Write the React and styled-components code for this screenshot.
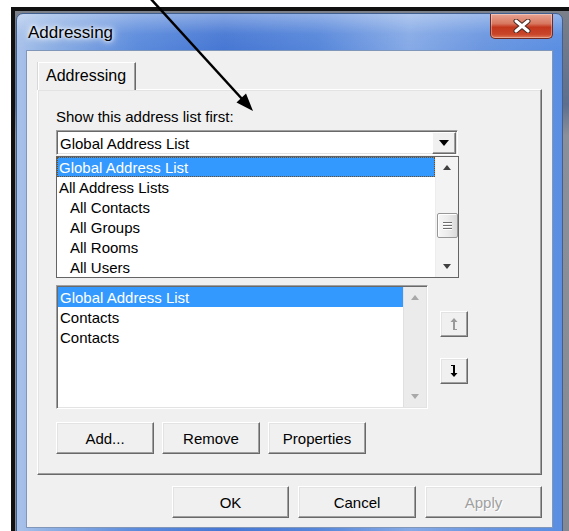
import React from 'react';
import styled, { createGlobalStyle } from 'styled-components';

const Global = createGlobalStyle`
  html, body { margin: 0; padding: 0; background: #fff; }
  body { font-family: "Liberation Sans", Arial, sans-serif; color: #000; }
  * { box-sizing: border-box; }
`;

const Screen = styled.div`
  position: relative;
  width: 569px;
  height: 531px;
  overflow: hidden;
  background: #fff;
  padding: 7px 0 0 11px;
`;

const Shot = styled.div`
  height: 524px;
  border-top: 4px solid #111;
  border-left: 4px solid #111;
  background: linear-gradient(180deg, #7b8089 0%, #5d6f8e 18%, #8a9099 24%, #858a92 100%);
  display: flex;
  align-items: flex-start;
`;

const Window = styled.div`
  width: 547px;
  height: 526px;
  margin: 2px 0 0 1px;
  padding: 0 9px 10px;
  border: 1px solid #41608f;
  border-radius: 7px 7px 0 0;
  background:
    linear-gradient(180deg, rgba(255,255,255,0.35) 0px, rgba(255,255,255,0.05) 20px, rgba(255,255,255,0) 36px),
    linear-gradient(90deg, #a9c2ea 0%, #8eb0e4 6%, #5c8bdc 22%, #4677d3 38%, #5686da 55%, #86aae6 72%, #6a96e0 86%, #5a8ee2 100%);
  display: flex;
  flex-direction: column;
`;

const TitleBar = styled.div`
  height: 36px;
  flex: none;
  display: flex;
  align-items: flex-start;
  justify-content: space-between;
`;

const Title = styled.div`
  margin: 9px 0 0 2px;
  font-size: 17px;
  line-height: 20px;
  color: #000;
  text-shadow: 0 0 6px #fff, 0 0 10px rgba(255,255,255,0.9), 0 0 3px rgba(255,255,255,0.9);
`;

const CloseButton = styled.div`
  width: 63px;
  height: 25px;
  border: 1px solid #6d2a22;
  border-top: none;
  border-radius: 0 0 5px 5px;
  background: linear-gradient(180deg, #e8a493 0%, #d8775f 40%, #c2361c 55%, #c9462a 85%, #e07a5a 100%);
  box-shadow: inset 0 0 0 1px rgba(255,255,255,0.35);
  display: flex;
  align-items: center;
  justify-content: center;
`;

const Client = styled.div`
  flex: 1;
  background: #f0f0f0;
  border: 1px solid #8197ba;
  padding: 11px 10px 0 10px;
  display: flex;
  flex-direction: column;
`;

const TabStrip = styled.div`
  display: flex;
  height: 28px;
  margin-bottom: -1px;
  position: relative;
  z-index: 1;
`;

const Tab = styled.div`
  margin-left: 1px;
  width: 98px;
  height: 28px;
  padding: 3px 0 0 7px;
  background: #f0f0f0;
  border-top: 1px solid #fff;
  border-left: 1px solid #fff;
  border-right: 1px solid #696969;
  box-shadow: inset -1px 0 #a0a0a0, -1px 0 #d8d8d8;
  font-size: 16px;
  line-height: 19px;
`;

const Panel = styled.div`
  border: 1px solid;
  border-color: #fff #696969 #696969 #fff;
  box-shadow: inset -1px -1px #a0a0a0, inset 1px 1px #e3e3e3;
  padding: 0 0 20px 18px;
  display: flex;
  flex-direction: column;
  align-items: flex-start;
`;

const Label = styled.div`
  margin-top: 18px;
  font-size: 15px;
  line-height: 18px;
`;

const Combo = styled.div`
  margin-top: 4px;
  width: 402px;
  height: 25px;
  background: #fff;
  border: 1px solid;
  border-color: #a0a0a0 #fff #fff #a0a0a0;
  box-shadow: inset 1px 1px #696969, inset -1px -1px #e3e3e3;
  padding: 1px 1px 0 3px;
  display: flex;
  align-items: center;
  justify-content: space-between;
  font-size: 15px;
`;

const DropButton = styled.div`
  width: 24px;
  height: 22px;
  background: #f0f0f0;
  border: 1px solid;
  border-color: #fff #696969 #696969 #fff;
  box-shadow: inset -1px -1px #a0a0a0;
  display: flex;
  align-items: center;
  justify-content: center;
`;

const Tri = styled.div`
  width: 0;
  height: 0;
  border-left: ${p => p.$w / 2}px solid transparent;
  border-right: ${p => p.$w / 2}px solid transparent;
  ${p => (p.$up ? 'border-bottom' : 'border-top')}: ${p => p.$h}px solid ${p => p.$c};
`;

const DropList = styled.div`
  margin-top: 1px;
  width: 403px;
  height: 122px;
  background: #fff;
  border: 1px solid #646464;
  display: flex;
`;

const Items = styled.div`
  flex: 1;
  display: flex;
  flex-direction: column;
`;

const Item = styled.div`
  height: 20px;
  line-height: 21px;
  overflow: hidden;
  font-size: 15px;
  white-space: nowrap;
  padding-left: ${p => (p.$indent ? 13 : 2)}px;
  background: ${p => (p.$selected ? '#3399ff' : 'transparent')};
  color: ${p => (p.$selected ? '#fff' : '#000')};
  outline: ${p => (p.$focus ? '1px dotted #7a4a10' : 'none')};
  outline-offset: -1px;
`;

const ScrollBar = styled.div`
  width: 23px;
  background: ${p => (p.$disabled ? '#ebebeb' : '#f3f3f3')};
  border-left: 1px solid ${p => (p.$disabled ? '#e0e0e0' : '#ededed')};
  display: flex;
  flex-direction: column;
`;

const ScrollArrow = styled.div`
  height: 21px;
  display: flex;
  align-items: center;
  justify-content: center;
`;

const Track = styled.div`
  flex: 1;
  display: flex;
  flex-direction: column;
  align-items: center;
`;

const Thumb = styled.div`
  margin-top: ${p => p.$offset}px;
  width: 21px;
  height: 25px;
  border: 1px solid #979797;
  border-radius: 2px;
  background: linear-gradient(90deg, #f6f6f6 0%, #ececec 50%, #dadada 100%);
  box-shadow: inset 1px 1px #fff;
  display: flex;
  flex-direction: column;
  align-items: center;
  justify-content: center;
  gap: 2px;
`;

const Grip = styled.div`
  width: 9px;
  height: 1px;
  background: #6e6e6e;
  box-shadow: 0 1px #fff;
`;

const OrderRow = styled.div`
  margin-top: 7px;
  display: flex;
  align-items: flex-start;
`;

const OrderList = styled.div`
  width: 372px;
  height: 124px;
  background: #fff;
  border: 1px solid;
  border-color: #a0a0a0 #fff #fff #a0a0a0;
  box-shadow: inset 1px 1px #696969, inset -1px -1px #e3e3e3;
  padding: 1px;
  display: flex;
`;

const MoveColumn = styled.div`
  margin-left: 12px;
  margin-top: 26px;
  display: flex;
  flex-direction: column;
  gap: 21px;
`;

const MoveButton = styled.div`
  width: 28px;
  height: 26px;
  background: #f0f0f0;
  border: 1px solid;
  border-color: #fff #696969 #696969 #fff;
  box-shadow: inset -1px -1px #a0a0a0, inset 1px 1px #e3e3e3;
  display: flex;
  align-items: center;
  justify-content: center;
`;

const ButtonRow = styled.div`
  margin-top: 13px;
  display: flex;
  gap: 8px;
`;

const Button = styled.div`
  width: ${p => p.$w}px;
  height: 32px;
  background: #f0f0f0;
  border: 1px solid;
  border-color: #fff #696969 #696969 #fff;
  box-shadow: inset -1px -1px #a0a0a0, inset 1px 1px #e3e3e3;
  display: flex;
  align-items: center;
  justify-content: center;
  font-size: 15px;
  color: ${p => (p.$disabled ? '#a0a0a0' : '#000')};
  text-shadow: ${p => (p.$disabled ? '1px 1px #fff' : 'none')};
`;

const Footer = styled.div`
  margin-top: 11px;
  display: flex;
  justify-content: flex-end;
  gap: 9px;
`;

const Pointer = styled.svg`
  position: absolute;
  left: 0;
  top: 0;
  pointer-events: none;
`;

function UpIcon({ color }) {
  return (
    <svg width="8" height="12" viewBox="0 0 8 12">
      <path d="M4 0 L7.5 4 L5 4 L5 11 L7 11 L7 12 L3 12 L3 4 L0.5 4 Z" fill={color} />
    </svg>
  );
}

function DownIcon({ color }) {
  return (
    <svg width="8" height="12" viewBox="0 0 8 12">
      <path d="M1 0 L5 0 L5 8 L7.5 8 L4 12 L0.5 8 L3 8 L3 1 L1 1 Z" fill={color} />
    </svg>
  );
}

function CloseGlyph() {
  return (
    <svg width="18" height="14" viewBox="0 0 18 14">
      <path d="M3 2 L15 12 M15 2 L3 12" stroke="#4a2a24" strokeWidth="5" strokeLinecap="round" />
      <path d="M3 2 L15 12 M15 2 L3 12" stroke="#fff" strokeWidth="3" strokeLinecap="round" />
    </svg>
  );
}

const addressLists = [
  { name: 'Global Address List', selected: true },
  { name: 'All Address Lists' },
  { name: 'All Contacts', indent: true },
  { name: 'All Groups', indent: true },
  { name: 'All Rooms', indent: true },
  { name: 'All Users', indent: true },
];

const searchOrder = [
  { name: 'Global Address List', selected: true },
  { name: 'Contacts' },
  { name: 'Contacts' },
];

export default function App() {
  return (
    <>
      <Global />
      <Screen>
        <Shot>
          <Window>
            <TitleBar>
              <Title>Addressing</Title>
              <CloseButton>
                <CloseGlyph />
              </CloseButton>
            </TitleBar>
            <Client>
              <TabStrip>
                <Tab>Addressing</Tab>
              </TabStrip>
              <Panel>
                <Label>Show this address list first:</Label>
                <Combo>
                  <span>Global Address List</span>
                  <DropButton>
                    <Tri $w={11} $h={6} $c="#000" />
                  </DropButton>
                </Combo>
                <DropList>
                  <Items>
                    {addressLists.map(l => (
                      <Item key={l.name} $indent={l.indent} $selected={l.selected} $focus={l.selected}>
                        {l.name}
                      </Item>
                    ))}
                  </Items>
                  <ScrollBar>
                    <ScrollArrow>
                      <Tri $up $w={9} $h={5} $c="#404040" />
                    </ScrollArrow>
                    <Track>
                      <Thumb $offset={35}>
                        <Grip />
                        <Grip />
                        <Grip />
                      </Thumb>
                    </Track>
                    <ScrollArrow>
                      <Tri $w={9} $h={5} $c="#404040" />
                    </ScrollArrow>
                  </ScrollBar>
                </DropList>
                <OrderRow>
                  <OrderList>
                    <Items>
                      {searchOrder.map((l, i) => (
                        <Item key={i} $selected={l.selected}>
                          {l.name}
                        </Item>
                      ))}
                    </Items>
                    <ScrollBar $disabled>
                      <ScrollArrow>
                        <Tri $up $w={9} $h={5} $c="#a8a8a8" />
                      </ScrollArrow>
                      <Track />
                      <ScrollArrow>
                        <Tri $w={9} $h={5} $c="#a8a8a8" />
                      </ScrollArrow>
                    </ScrollBar>
                  </OrderList>
                  <MoveColumn>
                    <MoveButton>
                      <UpIcon color="#9a9a9a" />
                    </MoveButton>
                    <MoveButton>
                      <DownIcon color="#000" />
                    </MoveButton>
                  </MoveColumn>
                </OrderRow>
                <ButtonRow>
                  <Button $w={98}>Add...</Button>
                  <Button $w={98}>Remove</Button>
                  <Button $w={98}>Properties</Button>
                </ButtonRow>
              </Panel>
              <Footer>
                <Button $w={117}>OK</Button>
                <Button $w={118}>Cancel</Button>
                <Button $w={117} $disabled>Apply</Button>
              </Footer>
            </Client>
          </Window>
        </Shot>
        <Pointer width="569" height="531" viewBox="0 0 569 531">
          <line x1="150" y1="-2" x2="243" y2="100" stroke="#000" strokeWidth="2.5" />
          <polygon points="253,111 236.5,102.5 246,93.5" fill="#000" />
        </Pointer>
      </Screen>
    </>
  );
}
